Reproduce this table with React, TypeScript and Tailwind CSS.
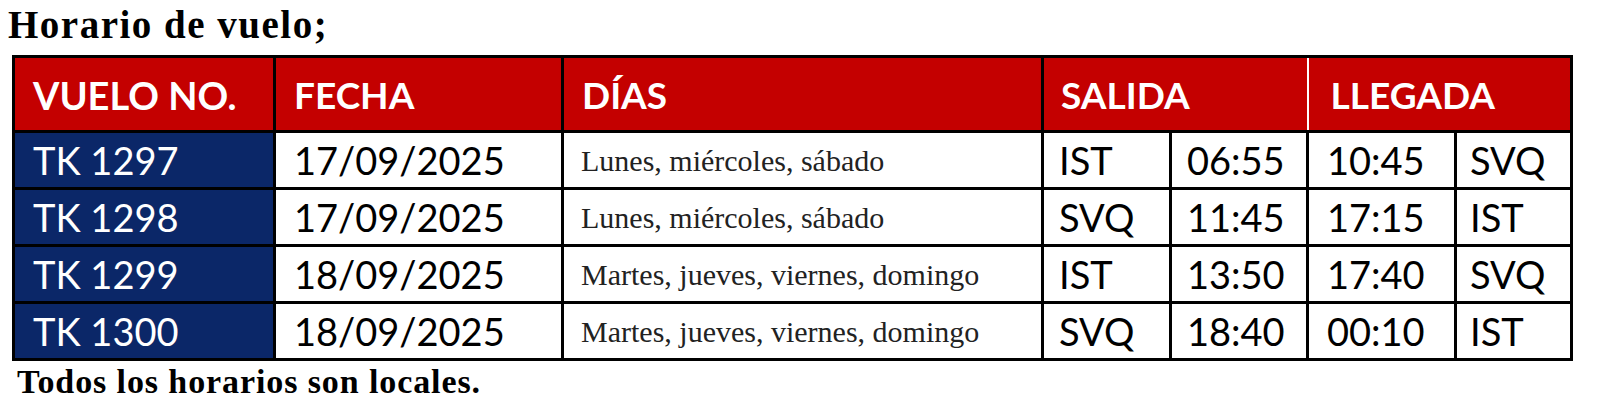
const rows = [
  { vuelo: "TK 1297", fecha: "17/09/2025", dias: "Lunes, miércoles, sábado", from: "IST", dep: "06:55", arr: "10:45", to: "SVQ" },
  { vuelo: "TK 1298", fecha: "17/09/2025", dias: "Lunes, miércoles, sábado", from: "SVQ", dep: "11:45", arr: "17:15", to: "IST" },
  { vuelo: "TK 1299", fecha: "18/09/2025", dias: "Martes, jueves, viernes, domingo", from: "IST", dep: "13:50", arr: "17:40", to: "SVQ" },
  { vuelo: "TK 1300", fecha: "18/09/2025", dias: "Martes, jueves, viernes, domingo", from: "SVQ", dep: "18:40", arr: "00:10", to: "IST" },
];

const sans = "font-['Lato','Open_Sans',sans-serif]";
const serif = "font-['Liberation_Serif','Times_New_Roman',serif]";

export default function App() {
  return (
    <div className="w-[1600px] h-[408px] bg-white pl-[8px] pt-[5px]">
      <h1 className={`${serif} font-bold text-[39px] leading-[40px] tracking-[1.5px] text-black`}>Horario de vuelo;</h1>

      <table className="ml-[4px] mt-[10px] w-[1558px] table-fixed border-collapse border-[3px] border-black">
        <colgroup>
          <col className="w-[261px]" />
          <col className="w-[288px]" />
          <col className="w-[480px]" />
          <col className="w-[128px]" />
          <col className="w-[137px]" />
          <col className="w-[148px]" />
          <col className="w-[116px]" />
        </colgroup>
        <thead>
          <tr className={`h-[75px] bg-[#c40000] text-white ${sans} font-bold text-[37px] text-left`}>
            <th className="border-[3px] border-black pl-[18px] pt-[2px] font-bold text-[38px]">VUELO NO.</th>
            <th className="border-[3px] border-black pl-[18px] pt-[2px] font-bold">FECHA</th>
            <th className="border-[3px] border-black pl-[18px] pt-[2px] font-bold">DÍAS</th>
            <th colSpan={2} className="border-y-[3px] border-l-[3px] border-r-[2px] border-black border-r-white pl-[17px] pt-[2px] font-bold">SALIDA</th>
            <th colSpan={2} className="border-y-[3px] border-r-[3px] border-l-[2px] border-black border-l-white pl-[22px] pt-[2px] font-bold">LLEGADA</th>
          </tr>
        </thead>
        <tbody>
          {rows.map((r) => (
            <tr key={r.vuelo} className={`h-[57px] ${sans} text-[38px] text-black`}>
              <td className="border-[3px] border-black bg-[#0b2768] text-white pl-[18px] leading-none">{r.vuelo}</td>
              <td className="border-[3px] border-black pl-[18px] leading-none">{r.fecha}</td>
              <td className={`border-[3px] border-black pl-[17px] pt-[2px] ${serif} text-[30px] text-[#222] leading-none`}>{r.dias}</td>
              <td className="border-[3px] border-black pl-[15px] leading-none">{r.from}</td>
              <td className="border-[3px] border-black pl-[15px] leading-none">{r.dep}</td>
              <td className="border-[3px] border-black pl-[18px] leading-none">{r.arr}</td>
              <td className="border-[3px] border-black pl-[13px] leading-none">{r.to}</td>
            </tr>
          ))}
        </tbody>
      </table>

      <p className={`${serif} font-bold text-[34px] leading-[36px] tracking-[0.9px] text-black pl-[9px] pt-[3px]`}>Todos los horarios son locales.</p>
    </div>
  );
}
